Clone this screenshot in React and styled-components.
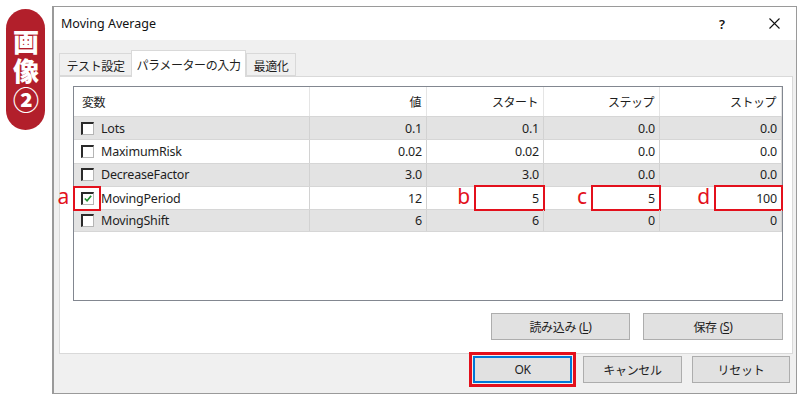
import React from 'react';
import styled, { createGlobalStyle } from 'styled-components';

const GlobalStyle = createGlobalStyle`
  body {
    margin: 0;
    background: #fff;
    font-family: "Noto Sans", "Noto Sans CJK JP", sans-serif;
    color: #1e1e1e;
  }
  * { box-sizing: border-box; }
`;

const columns = ['変数', '値', 'スタート', 'ステップ', 'ストップ'];

const rows = [
  { name: 'Lots', values: ['0.1', '0.1', '0.0', '0.0'] },
  { name: 'MaximumRisk', values: ['0.02', '0.02', '0.0', '0.0'] },
  { name: 'DecreaseFactor', values: ['3.0', '3.0', '0.0', '0.0'] },
  { name: 'MovingPeriod', values: ['12', '5', '5', '100'], checked: true, marks: ['b', 'c', 'd'] },
  { name: 'MovingShift', values: ['6', '6', '0', '0'] },
];

// how far the red box starts inside each highlighted cell
const markInset = [null, 47, 47, 54];

const App = () => {
  return (
    <>
      <GlobalStyle />
      <Page>
        <Badge>
          <BadgeText>画像②</BadgeText>
        </Badge>
        <Window>
          <TitleBar>
            <Title>Moving Average</Title>
            <TitleButtons>
              <HelpButton>?</HelpButton>
              <CloseButton>
                <svg width="11" height="11" viewBox="0 0 11 11">
                  <path d="M0.5 0.5 L10.5 10.5 M10.5 0.5 L0.5 10.5" stroke="#111" strokeWidth="1.1" fill="none" />
                </svg>
              </CloseButton>
            </TitleButtons>
          </TitleBar>
          <Body>
            <TabStrip>
              <Tab $width={72}>テスト設定</Tab>
              <Tab $active $width={115}>パラメーターの入力</Tab>
              <Tab $width={50}>最適化</Tab>
            </TabStrip>
            <Panel>
              <Grid>
                <HeaderRow>
                  {columns.map((c, i) => (
                    <HeaderCell key={c} $first={i === 0}>{c}</HeaderCell>
                  ))}
                </HeaderRow>
                {rows.map((r, ri) => (
                  <Row key={r.name} $shaded={ri % 2 === 0}>
                    <NameCell>
                      <CheckWrap>
                        <Checkbox>
                          {r.checked && (
                            <svg width="11" height="11" viewBox="0 0 11 11">
                              <path d="M2 5.5 L4.5 8 L9 2.5" stroke="#1f8f2f" strokeWidth="1.8" fill="none" />
                            </svg>
                          )}
                        </Checkbox>
                        {r.checked && (
                          <CheckMark>
                            <MarkLetter>a</MarkLetter>
                          </CheckMark>
                        )}
                      </CheckWrap>
                      {r.name}
                    </NameCell>
                    {r.values.map((v, vi) => (
                      <ValueCell key={vi}>
                        {v}
                        {r.marks && markInset[vi] !== null && (
                          <ValueMark $inset={markInset[vi]}>
                            <MarkLetter>{r.marks[vi - 1]}</MarkLetter>
                          </ValueMark>
                        )}
                      </ValueCell>
                    ))}
                  </Row>
                ))}
              </Grid>
              <PanelButtons>
                <Button $width={139}>読み込み (<u>L</u>)</Button>
                <Button $width={140}>保存 (<u>S</u>)</Button>
              </PanelButtons>
            </Panel>
            <Footer>
              <DefaultWrap>
                <Button $width={99} $default>OK</Button>
              </DefaultWrap>
              <Button $width={99}>キャンセル</Button>
              <Button $width={98}>リセット</Button>
            </Footer>
          </Body>
        </Window>
      </Page>
    </>
  );
};

const Page = styled.div`
  display: flex;
  align-items: flex-start;
  gap: 7px;
  padding: 6px 0 0 6px;
  width: 800px;
  height: 402px;
`;

const Badge = styled.div`
  margin-top: 3px;
  width: 39px;
  height: 121px;
  border-radius: 20px;
  background: #b21f2b;
  display: flex;
  justify-content: center;
  padding-top: 20px;
  flex-shrink: 0;
`;

const BadgeText = styled.div`
  writing-mode: vertical-rl;
  text-orientation: upright;
  color: #fff;
  font-family: "Noto Sans CJK JP", sans-serif;
  font-weight: 900;
  font-size: 26px;
  letter-spacing: 3px;
  line-height: 1;
`;

const Window = styled.div`
  width: 745px;
  height: 388px;
  border: 1px solid #9a9a9a;
  border-left-width: 2px;
  display: flex;
  flex-direction: column;
  background: #fff;
`;

const TitleBar = styled.div`
  height: 33px;
  display: flex;
  align-items: center;
  justify-content: space-between;
  padding-left: 7px;
  flex-shrink: 0;
`;

const Title = styled.div`
  font-size: 12.5px;
  color: #111;
`;

const TitleButtons = styled.div`
  display: flex;
  align-items: center;
  gap: 5px;
`;

const HelpButton = styled.div`
  width: 50px;
  text-align: center;
  font-size: 13px;
  font-weight: 600;
  color: #111;
`;

const CloseButton = styled.div`
  width: 44px;
  display: flex;
  justify-content: center;
`;

const Body = styled.div`
  flex: 1;
  background: #f0f0f0;
  display: flex;
  flex-direction: column;
  padding: 0 3px 0 5px;
`;

const TabStrip = styled.div`
  height: 36px;
  display: flex;
  align-items: flex-end;
  position: relative;
  z-index: 1;
  flex-shrink: 0;
`;

const Tab = styled.div`
  width: ${p => p.$width}px;
  height: ${p => (p.$active ? 27 : 23)}px;
  margin-bottom: ${p => (p.$active ? -1 : 0)}px;
  background: ${p => (p.$active ? '#fff' : '#f0f0f0')};
  border: 1px solid #d9d9d9;
  border-bottom: ${p => (p.$active ? 'none' : '1px solid #d9d9d9')};
  ${p => !p.$active && 'border-right: none;'}
  font-family: "Noto Sans CJK JP", sans-serif;
  font-size: 12px;
  letter-spacing: -0.4px;
  display: flex;
  align-items: center;
  justify-content: center;
  padding-top: ${p => (p.$active ? 0 : 1)}px;
  &:last-child { border-right: 1px solid #d9d9d9; }
`;

const Panel = styled.div`
  height: 278px;
  background: #fff;
  border: 1px solid #d9d9d9;
  padding: 9px 9px 12px 13px;
  display: flex;
  flex-direction: column;
  flex-shrink: 0;
`;

const Grid = styled.div`
  height: 215px;
  border: 1px solid #828790;
  background: #fff;
  flex-shrink: 0;
`;

const gridCols = `
  display: grid;
  grid-template-columns: 236px 117px 117px 116px 122px;
`;

const HeaderRow = styled.div`
  ${gridCols}
  height: 29px;
`;

const HeaderCell = styled.div`
  display: flex;
  align-items: center;
  justify-content: ${p => (p.$first ? 'flex-start' : 'flex-end')};
  padding: ${p => (p.$first ? '0 0 0 8px' : '0 5px 0 0')};
  border-right: 1px solid #e5e5e5;
  font-family: "Noto Sans CJK JP", sans-serif;
  font-size: 12px;
  letter-spacing: -0.5px;
`;

const Row = styled.div`
  ${gridCols}
  height: 23.3px;
  background: ${p => (p.$shaded ? '#e3e3e3' : '#fff')};
  border-top: 1px solid #d6d6d6;
  &:last-child { border-bottom: 1px solid #d6d6d6; }
`;

const cellBase = `
  position: relative;
  display: flex;
  align-items: center;
  border-right: 1px solid #d2d2d2;
  font-size: 12.5px;
  letter-spacing: -0.2px;
`;

const NameCell = styled.div`
  ${cellBase}
  padding-left: 7px;
  gap: 7px;
`;

const ValueCell = styled.div`
  ${cellBase}
  justify-content: flex-end;
  padding-right: 4px;
`;

const CheckWrap = styled.div`
  position: relative;
  display: flex;
`;

const Checkbox = styled.span`
  width: 13px;
  height: 13px;
  background: #fff;
  border-top: 2px solid #2a2a2a;
  border-left: 2px solid #2a2a2a;
  border-bottom: 1px solid #b5b5b5;
  border-right: 1px solid #b5b5b5;
  display: flex;
  align-items: center;
  justify-content: center;
`;

const markBox = `
  position: absolute;
  border: 2.5px solid #e3101c;
`;

const CheckMark = styled.div`
  ${markBox}
  left: -8px;
  top: -6px;
  width: 28px;
  height: 25px;
`;

const ValueMark = styled.div`
  ${markBox}
  left: ${p => p.$inset}px;
  right: -2px;
  top: -2px;
  bottom: -2px;
`;

const MarkLetter = styled.span`
  position: absolute;
  right: calc(100% + 6px);
  top: 50%;
  transform: translateY(-56%);
  color: #e3101c;
  font-family: "Noto Sans", sans-serif;
  font-size: 21px;
  line-height: 1;
`;

const PanelButtons = styled.div`
  display: flex;
  justify-content: flex-end;
  gap: 13px;
  margin-top: 12px;
`;

const Button = styled.div`
  width: ${p => p.$width}px;
  height: 27px;
  background: #e1e1e1;
  border: ${p => (p.$default ? '2px solid #0078d7' : '1px solid #adadad')};
  display: flex;
  align-items: center;
  justify-content: center;
  font-family: "Noto Sans", "Noto Sans CJK JP", sans-serif;
  font-size: 12px;
  letter-spacing: -0.3px;
  u { text-underline-offset: 2px; }
`;

const Footer = styled.div`
  flex: 1;
  display: flex;
  justify-content: flex-end;
  align-items: flex-start;
  gap: 10px;
  padding: 2px 3px 0 0;
`;

const DefaultWrap = styled.div`
  outline: 3px solid #e3101c;
  outline-offset: 1px;
  margin-right: 1px;
`;

export default App;
